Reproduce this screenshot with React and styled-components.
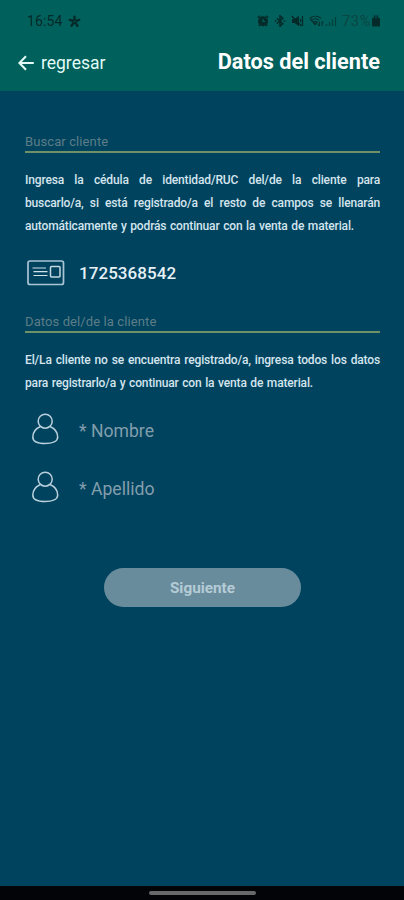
import styled, { createGlobalStyle } from "styled-components";

function AlarmIcon() {
  return (
    <svg width="12" height="12" viewBox="0 0 12 12">
      <path d="M.7 2.8 3 .8M11.3 2.8 9 .8M2.8 9.5 1.8 11M9.2 9.5l1 1.5" fill="none" stroke="currentColor" strokeWidth="1.4" />
      <circle cx="6" cy="6.3" r="5" fill="currentColor" />
      <path d="M6 3.9v2.6h2.2" fill="none" stroke="#00605b" strokeWidth="1.2" />
    </svg>
  );
}

function BluetoothIcon() {
  return (
    <svg width="12" height="12" viewBox="0 0 12 12">
      <path d="m2.8 3.2 6 5.6L6 11.2V.8l2.8 2.4-6 5.6" fill="none" stroke="currentColor" strokeWidth="1.5" />
      <path d="M.8 6h1.6M9.6 6h1.6" stroke="currentColor" strokeWidth="1.5" />
    </svg>
  );
}

function MuteIcon() {
  return (
    <svg width="13" height="12" viewBox="0 0 13 12">
      <path d="M1 4h2.5L8 .8v10.4L3.5 8H1z" fill="currentColor" />
      <path d="m.8 1 9.8 10M11.5 1v10M9.6 4v3" fill="none" stroke="currentColor" strokeWidth="1.3" />
    </svg>
  );
}

function WifiIcon() {
  return (
    <svg width="15" height="12" viewBox="0 0 15 12">
      <path d="M.8 3.4C4 .5 8.5.5 12 3.4M2.6 5.3c2.4-2 5-2 7.4 0M4.5 7.3c1.2-1 2.5-1 3.7 0L6.4 9.4zM.8 3.4l5.6 6.4" fill="none" stroke="currentColor" strokeWidth="1.1" />
      <path d="M10.3 6.5V11M8.9 9.5l1.4 1.5M13 11V6.5l1.4 1.5" fill="none" stroke="currentColor" strokeWidth="1" />
    </svg>
  );
}

function SignalIcon() {
  return (
    <svg width="12" height="12" viewBox="0 0 12 12">
      <path d="M1.5 9v2M4.5 7v4M7.5 4.5V11M10.5 2v9" stroke="currentColor" strokeWidth="1.2" opacity=".6" />
    </svg>
  );
}

function BatteryIcon() {
  return (
    <svg width="8" height="12" viewBox="0 0 8 12">
      <path d="M2.5 3V1h3v2" fill="none" stroke="currentColor" strokeWidth="1.2" />
      <rect x="0" y="2.8" width="8" height="8.7" rx="1" fill="currentColor" />
    </svg>
  );
}

function FlowerIcon() {
  return (
    <svg width="13" height="13" viewBox="0 0 13 13">
      <path d="M6.5 6.5V1.7M6.5 6.5 1.8 4.9M6.5 6.5l4.7-1.6M6.5 6.5l-3 4.300M6.5 6.5l3 4.300" stroke="currentColor" strokeWidth="2.4" strokeLinecap="round" />
      <circle cx="6.5" cy="6.5" r=".8" fill="#00605b" />
    </svg>
  );
}

function ArrowIcon() {
  return (
    <svg width="16" height="16" viewBox="0 0 16 16">
      <path d="M15.8 8H1.6M8 1.3 1.4 8 8 14.7" fill="none" stroke="#e2fbf6" strokeWidth="2.1" />
    </svg>
  );
}

function CardIcon() {
  return (
    <svg width="38" height="26" viewBox="0 0 38 26">
      <rect x="1" y="1" width="35.5" height="23.5" rx="2" fill="none" stroke="#a9c5d5" strokeWidth="1.7" />
      <path d="M5.5 8H19M6.5 11.7h14M6.5 15.5h14" stroke="#d2e2ea" strokeWidth="1.2" />
      <rect x="23.5" y="6.5" width="9.5" height="10.5" rx="1" fill="none" stroke="#c4d8e2" strokeWidth="1.5" />
    </svg>
  );
}

function PersonIcon() {
  return (
    <svg width="28" height="32" viewBox="0 0 28 32">
      <circle cx="13.2" cy="8.2" r="7" fill="none" stroke="#bad0dc" strokeWidth="1.5" />
      <path d="M8.5 13.5C4 15.5.8 19.5.8 24c0 4.2 5 6.5 12.3 6.5S25.7 28.2 25.7 24c0-4.500-3.200-8.500-7.700-10.500" fill="none" stroke="#bad0dc" strokeWidth="1.5" />
    </svg>
  );
}

function PersonField({ label }) {
  return (
    <Field $height={58}>
      <IconSlot $indent={6.5}>
        <PersonIcon />
      </IconSlot>
      <Placeholder>{label}</Placeholder>
    </Field>
  );
}

function App() {
  return (
    <Screen>
      <GlobalStyle />
      <Header>
        <StatusBar>
          <Clock>16:54</Clock>
          <FlowerIcon />
          <StatusIcons>
            <AlarmIcon />
            <BluetoothIcon />
            <MuteIcon />
            <Network>
              <WifiIcon />
              <SignalIcon />
            </Network>
          </StatusIcons>
          <Percent>73%</Percent>
          <BatteryIcon />
        </StatusBar>
        <TitleBar>
          <Back>
            <ArrowIcon />
            regresar
          </Back>
          <Title>Datos del cliente</Title>
        </TitleBar>
      </Header>
      <Content>
        <SectionTitle>Buscar cliente</SectionTitle>
        <Help>
          <Line>Ingresa la cédula de identidad/RUC del/de la cliente para</Line>
          <Line>buscarlo/a, si está registrado/a el resto de campos se llenarán</Line>
          <Line $width={329}>automáticamente y podrás continuar con la venta de material.</Line>
        </Help>
        <ClientId $height={74}>
          <IconSlot $indent={2}>
            <CardIcon />
          </IconSlot>
          <Value>1725368542</Value>
        </ClientId>
        <SectionTitle>Datos del/de la cliente</SectionTitle>
        <Help>
          <Line>El/La cliente no se encuentra registrado/a, ingresa todos los datos</Line>
          <Line $width={288}>para registrarlo/a y continuar con la venta de material.</Line>
        </Help>
        <People>
          <PersonField label="* Nombre" />
          <PersonField label="* Apellido" />
        </People>
        <NextButton>Siguiente</NextButton>
      </Content>
      <NavBar>
        <NavHandle />
      </NavBar>
    </Screen>
  );
}

const GlobalStyle = createGlobalStyle`
  * {
    box-sizing: border-box;
  }

  body {
    margin: 0;
    font-family: Roboto, "Liberation Sans", sans-serif;
  }

  svg {
    display: block;
    flex-shrink: 0;
  }
`;

const Screen = styled.div`
  display: flex;
  flex-direction: column;
  width: 404px;
  height: 900px;
  overflow: hidden;
  background-color: #00435f;
`;

const Header = styled.header`
  flex: 0 0 91px;
  background-color: #00605b;
`;

const StatusBar = styled.div`
  display: flex;
  align-items: center;
  height: 42px;
  padding: 0 24px 0 27px;
  color: #052a2a;
`;

const Clock = styled.span`
  width: 41px;
  font-size: 14px;
  letter-spacing: 0.1px;
`;

const StatusIcons = styled.div`
  display: flex;
  gap: 5px;
  margin-left: auto;
`;

const Network = styled.div`
  display: flex;
  gap: 1px;
`;

const Percent = styled.span`
  margin: 0 1px 0 5px;
  font-size: 14.5px;
  letter-spacing: 0.7px;
  color: #0b4643;
`;

const TitleBar = styled.div`
  display: flex;
  align-items: center;
  justify-content: space-between;
  height: 40px;
  padding: 0 24px 0 18px;
`;

const Back = styled.div`
  display: flex;
  align-items: center;
  gap: 7px;
  padding-top: 2px;
  font-size: 17.5px;
  color: #e2fbf6;
`;

const Title = styled.h1`
  margin: 0;
  padding-bottom: 2px;
  font-size: 21.7px;
  font-weight: 700;
  color: #fff;
`;

const Content = styled.main`
  display: flex;
  flex: 1;
  flex-direction: column;
  padding: 41px 24px 0 25px;
`;

const SectionTitle = styled.h2`
  height: 21px;
  margin: 0;
  border-bottom: 2px solid #6f9166;
  font-size: 13px;
  font-weight: 400;
  line-height: 19px;
  letter-spacing: 0.1px;
  color: #5c7d86;
`;

const Help = styled.div`
  margin-top: 16px;
`;

const Line = styled.p`
  width: ${({ $width }) => ($width ? $width + "px" : "100%")};
  height: 23px;
  margin: 0;
  font-size: 12px;
  font-weight: 500;
  line-height: 23px;
  letter-spacing: -0.15px;
  text-align-last: justify;
  white-space: nowrap;
  color: #d5e5ed;
`;

const Field = styled.div`
  display: flex;
  align-items: center;
  height: ${({ $height }) => $height}px;
`;

const ClientId = styled(Field)`
  padding-bottom: 4px;
`;

const IconSlot = styled.div`
  width: 54px;
  padding-left: ${({ $indent }) => $indent}px;
`;

const Value = styled.span`
  font-size: 17px;
  font-weight: 500;
  letter-spacing: 0.05px;
  color: #e6f1f6;
`;

const People = styled.div`
  margin-top: 5px;
`;

const Placeholder = styled.span`
  padding-top: 4px;
  font-size: 17.6px;
  color: #829eac;
`;

const NextButton = styled.button`
  align-self: center;
  width: 197px;
  height: 39px;
  margin-top: 52px;
  border: 0;
  border-radius: 20px;
  background-color: #698c9c;
  font-family: inherit;
  font-size: 15.3px;
  font-weight: 700;
  color: #b4cbd5;
`;

const NavBar = styled.footer`
  display: flex;
  flex: 0 0 14px;
  align-items: center;
  justify-content: center;
  background-color: #020408;
`;

const NavHandle = styled.div`
  width: 107px;
  height: 4px;
  border-radius: 2px;
  background-color: #69696b;
`;

export default App;
